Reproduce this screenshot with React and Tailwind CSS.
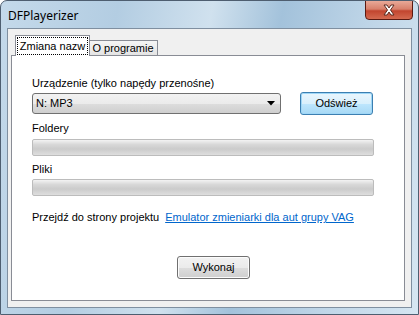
export default function App() {
  const ui = { fontFamily: '"Liberation Sans", Arial, sans-serif' };
  return (
    <div className="w-[419px] h-[315px] bg-white">
      <div className="relative w-[419px] h-[315px] flex flex-col rounded-t-[7px] border border-[#4e5e70] bg-[linear-gradient(100deg,#c4d9ea_0%,#b3cde2_25%,#d0e1ee_45%,#a3c2db_60%,#c0d6e8_80%,#d6e6f2_100%)] overflow-hidden">
        {/* title bar */}
        <div className="h-[27px] flex items-center pl-[7px] shrink-0">
          <span className="text-[12px] text-black leading-none mt-[2px]" style={{ fontFamily: '"Noto Sans", "Open Sans", sans-serif' }}>DFPlayerizer</span>
        </div>
        <div className="absolute top-[-1px] right-[5px] w-[48px] h-[20px] rounded-b-[4px] border border-[#5a1a12] bg-[linear-gradient(180deg,#e9a998_0%,#d8806b_45%,#c2452f_55%,#d46a50_100%)] flex items-center justify-center">
          <svg width="14" height="12" viewBox="0 0 14 12">
            <path d="M2 1 L5 1 L7 4 L9 1 L12 1 L8.5 6 L12 11 L9 11 L7 8 L5 11 L2 11 L5.5 6 Z" fill="#ffffff" stroke="#5b2a20" strokeWidth="1" strokeLinejoin="round" />
          </svg>
        </div>
        {/* client area */}
        <div className="flex-1 mx-[6px] mb-[6px] border border-[#7f8fa0] bg-[#f0f0f0] flex flex-col pt-[6px] pl-[3px] pr-[6px] pb-[6px]" style={ui}>
          {/* tabs */}
          <div className="flex items-end pl-[4px] h-[20px] shrink-0">
            <div className="relative z-10 w-[75px] h-[21px] -mb-px border-l border-t border-r border-[#898c95] bg-white px-[1px] pt-[1px]">
              <div className="h-[18px] border border-dotted border-black flex items-center justify-center text-[11px] text-black leading-none">Zmiana nazw</div>
            </div>
            <div className="w-[69px] h-[15px] -ml-px border-t border-r border-[#898c95] bg-[linear-gradient(180deg,#f5f5f5,#e4e4e4)] flex items-center justify-center text-[11px] text-black leading-none pt-[1px]">O programie</div>
          </div>
          {/* pane */}
          <div className="flex-1 border border-[#898c95] bg-white flex flex-col pl-[20px]">
            <div className="mt-[21px] h-[13px] text-[11px] leading-[13px] text-black">Urządzenie (tylko napędy przenośne)</div>
            <div className="mt-[2px] flex items-center h-[23px]">
              <div className="w-[249px] h-[21px] rounded-[3px] border border-[#707070] bg-[linear-gradient(180deg,#f2f2f2_0%,#ebebeb_50%,#dddddd_51%,#cfcfcf_100%)] flex items-center justify-between pl-[3px] pr-[5px]">
                <span className="text-[11px] text-black">N: MP3</span>
                <svg width="8" height="5" viewBox="0 0 8 5"><path d="M0 0 L8 0 L4 4.5 Z" fill="#000" /></svg>
              </div>
              <div className="ml-[19px] w-[73px] h-[23px] rounded-[3px] border border-[#3c7fb1] bg-[linear-gradient(180deg,#eaf6fd_0%,#d9f0fc_50%,#bee6fd_51%,#a7d9f5_100%)] shadow-[inset_0_0_0_1px_#9fd7f7] flex items-center justify-center text-[11px] text-black">Odśwież</div>
            </div>
            <div className="mt-[7px] h-[13px] text-[11px] leading-[13px] text-black">Foldery</div>
            <div className="mt-[4px] w-[342px] h-[17px] rounded-[2px] border border-[#bcbcbc] bg-[linear-gradient(180deg,#f3f3f3_0%,#d8d8d8_30%,#cbcbcb_60%,#dedede_100%)]" />
            <div className="mt-[7px] h-[13px] text-[11px] leading-[13px] text-black">Pliki</div>
            <div className="mt-[3px] w-[342px] h-[17px] rounded-[2px] border border-[#bcbcbc] bg-[linear-gradient(180deg,#f3f3f3_0%,#d8d8d8_30%,#cbcbcb_60%,#dedede_100%)]" />
            <div className="mt-[15px] h-[13px] flex text-[11px] leading-[13px]">
              <span className="text-black">Przejdź do strony projektu</span>
              <span className="ml-[6px] text-[#0066cc] underline">Emulator zmieniarki dla aut grupy VAG</span>
            </div>
            <div className="mt-[32px] ml-[145px] w-[73px] h-[23px] rounded-[3px] border border-[#707070] bg-[linear-gradient(180deg,#f2f2f2_0%,#ebebeb_50%,#dddddd_51%,#cfcfcf_100%)] shadow-[inset_0_0_0_1px_#fcfcfc] flex items-center justify-center text-[11px] text-black">Wykonaj</div>
          </div>
        </div>
      </div>
    </div>
  );
}
